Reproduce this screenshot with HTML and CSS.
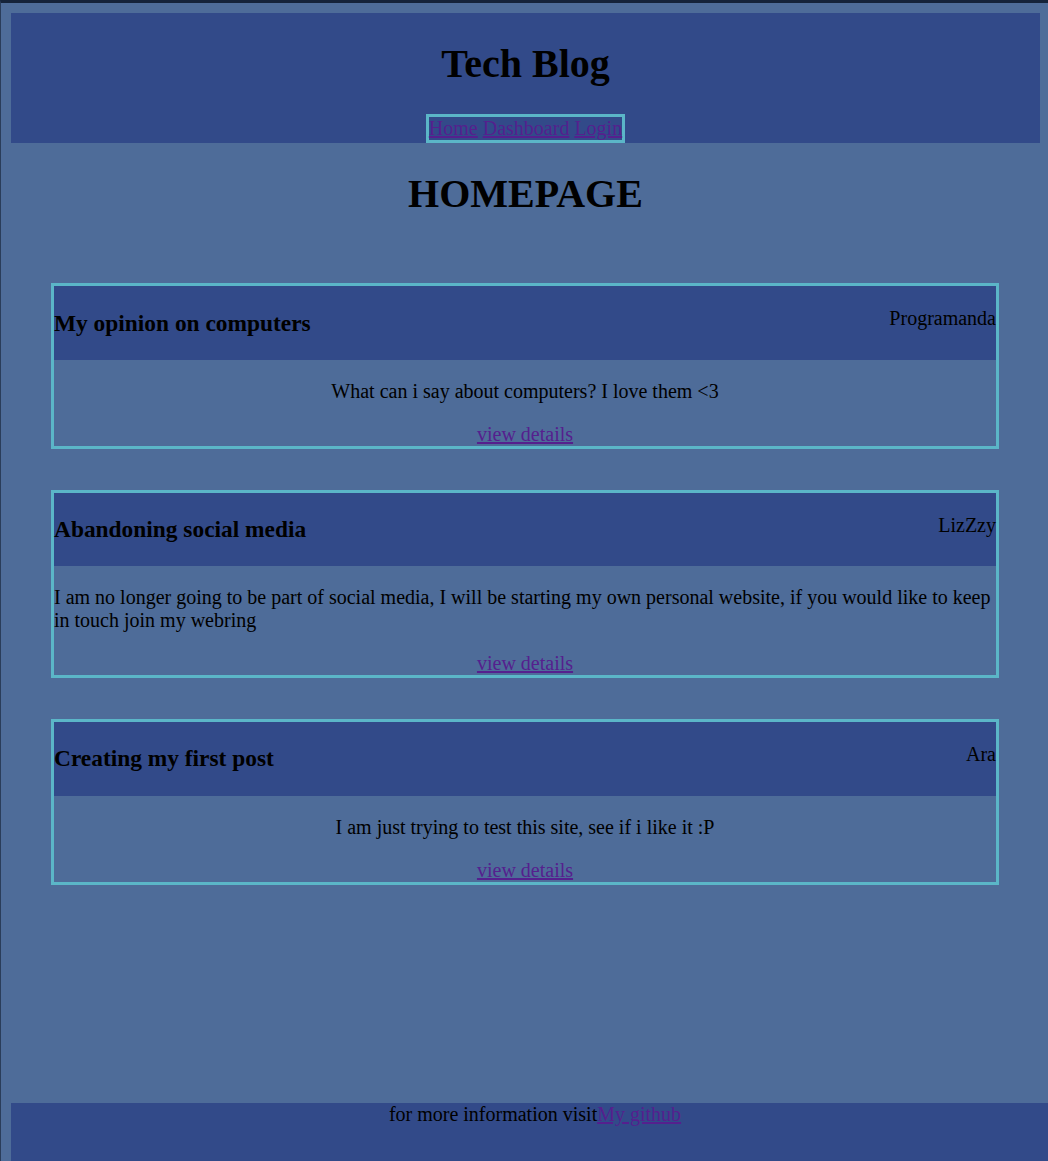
FILE: index.html
```html
<!DOCTYPE html>
<html lang="en">
<head>
<meta charset="utf-8">
<title>Tech Blog</title>
<link rel="stylesheet" href="styles.css">
</head>
<body>
<header class="site-header">
  <h1 class="site-title">Tech Blog</h1>
  <nav class="site-nav"><a href="#">Home</a> <a href="#">Dashboard</a> <a href="#">Login</a></nav>
</header>
<main class="main">
  <h1 class="page-title">HOMEPAGE</h1>
  <section class="posts">
    <article class="post">
      <div class="post-head">
        <h3 class="post-title">My opinion on computers</h3>
        <p class="post-author">Programanda</p>
      </div>
      <div class="post-body">
        <p class="post-text">What can i say about computers? I love them &lt;3</p>
        <a href="#">view details</a>
      </div>
    </article>
    <article class="post">
      <div class="post-head">
        <h3 class="post-title">Abandoning social media</h3>
        <p class="post-author">LizZzy</p>
      </div>
      <div class="post-body">
        <p class="post-text">I am no longer going to be part of social media, I will be starting my own personal website, if you would like to keep in touch join my webring</p>
        <a href="#">view details</a>
      </div>
    </article>
    <article class="post">
      <div class="post-head">
        <h3 class="post-title">Creating my first post</h3>
        <p class="post-author">Ara</p>
      </div>
      <div class="post-body">
        <p class="post-text">I am just trying to test this site, see if i like it :P</p>
        <a href="#">view details</a>
      </div>
    </article>
  </section>
</main>
<footer class="site-footer">for more information visit<a href="#">My github</a></footer>
</body>
</html>
```

FILE: styles.css
```css
html {
  background: #4e6c99;
  overflow: hidden;
}
body {
  margin: 0;
  min-height: 100vh;
  box-sizing: border-box;
  border-top: 3px solid #15233a;
  border-left: 1px solid #2a3d5a;
  padding: 10px 0 0 10px;
  display: flex;
  flex-direction: column;
  font-family: "Liberation Serif", "Times New Roman", serif;
  font-size: 20px;
  color: #000;
}
a {
  color: #55208e;
}
.site-header {
  background: #324a89;
  margin-right: 8px;
  display: flex;
  flex-direction: column;
  align-items: center;
}
.site-title {
  font-size: 40px;
  margin: 26.8px 0 27px;
}
.site-nav {
  border: 3px solid #5bb6c8;
}
.main {
  flex: 1;
  margin-right: 8px;
}
.page-title {
  font-size: 40px;
  text-align: center;
  margin: 26.8px 0;
}
.posts {
  padding: 40px 41px 0 40px;
  display: flex;
  flex-direction: column;
  gap: 40.5px;
}
.post {
  border: 3px solid #5bb6c8;
}
.post-head {
  background: #324a89;
  display: flex;
  justify-content: space-between;
  align-items: flex-start;
}
.post-title {
  font-size: 23.4px;
  margin: 23.4px 0;
}
.post-author {
  margin: 20px 0 0;
  padding-top: 1px;
}
.post-body {
  display: flex;
  flex-direction: column;
  align-items: center;
}
.post-text {
  margin: 20px 0;
}
.site-footer {
  width: 100vw;
  height: 58px;
  background: #324a89;
  text-align: center;
  flex-shrink: 0;
}
```
